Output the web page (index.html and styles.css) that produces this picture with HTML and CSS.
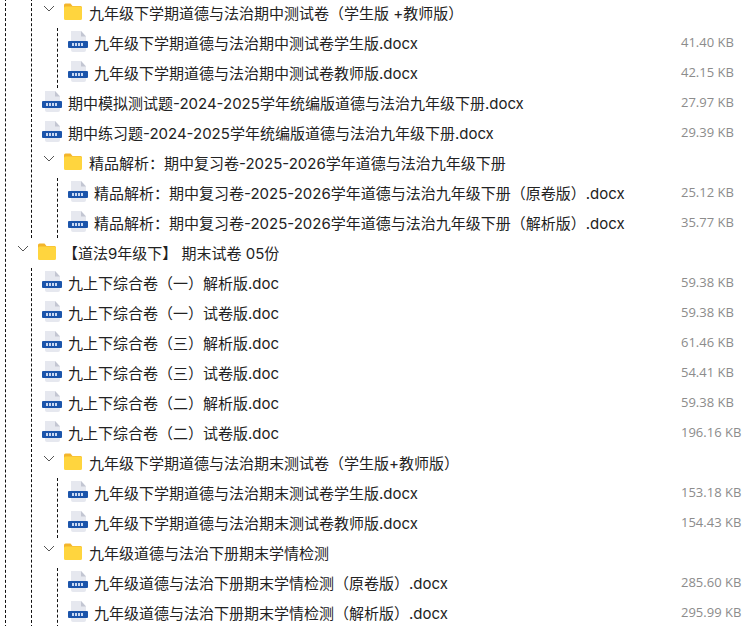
FILE: index.html
```html
<!DOCTYPE html>
<html lang="zh-CN">

<head>
    <meta charset="UTF-8">
    <meta name="viewport" content="width=device-width, initial-scale=1.0">
    <title>文件列表</title>
    <link rel="stylesheet" href="styles.css">
</head>

<body>
    <svg class="defs" width="0" height="0" aria-hidden="true">
        <symbol id="chevron" viewBox="0 0 12 7">
            <polyline points="1,1 6,6 11,1" fill="none" stroke="#555" stroke-width="1"></polyline>
        </symbol>
        <symbol id="folder" viewBox="0 0 18 17">
            <path d="M1.5 0.5h5l2 2.5h8a1.5 1.5 0 0 1 1.5 1.5v2h-18v-4.500a1.500 1.500 0 0 1 1.500-1.500z" fill="#f3b52c"></path>
            <path d="M1.500 3.500h15a1.500 1.500 0 0 1 1.500 1.500v10.500a1.500 1.500 0 0 1-1.500 1.500h-15a1.500 1.500 0 0 1-1.500-1.500v-10.500a1.500 1.500 0 0 1 1.500-1.500z" fill="#ffd53e"></path>
        </symbol>
        <symbol id="docx" viewBox="0 0 20 21">
            <path d="M3 0h10l5 5.500v13.500a2 2 0 0 1-2 2h-11a2 2 0 0 1-2-2z" fill="#e6e8ef"></path>
            <path d="M13 0l5 5.500h-5z" fill="#c3c6d2"></path>
            <rect x="0" y="10" width="20" height="7" rx="1" fill="#1c55ab"></rect>
            <line x1="4" y1="13.500" x2="16" y2="13.500" stroke="#c9d8f2" stroke-width="3" stroke-dasharray="2 1"></line>
        </symbol>
    </svg>

    <div class="tree" id="tree"></div>

    <script src="tree.js"></script>
</body>

</html>
```

FILE: styles.css
```css
body {
    font-family: Inter, "Noto Sans CJK SC", sans-serif;
    margin: 0;
    background-color: #fff;
    color: #222;
    overflow: hidden;
    height: 626px;
}

.defs {
    display: block;
}

.tree {
    margin: -2px 0 0 5px;
    border-left: 1px dashed #111;
}

.group {
    margin-left: 25px;
    border-left: 1px dashed #111;
}

.row {
    display: flex;
    align-items: center;
    height: 30px;
    font-size: 15px;
    white-space: nowrap;
}

.row-folder {
    padding-left: 11px;
}

.row-file {
    padding-left: 10px;
}

.chevron {
    width: 12px;
    height: 7px;
    margin: 0 9px 9px 0;
    flex: none;
}

.icon-folder {
    width: 18px;
    height: 17px;
    margin: 0 7px 4px 0;
    flex: none;
}

.icon-docx {
    width: 20px;
    height: 21px;
    margin: 0 6px 3px 0;
    flex: none;
}

.name {
    flex: 1;
    min-width: 0;
    margin-bottom: 2px;
}

.size {
    width: 65px;
    flex: none;
    margin-bottom: 2px;
    font-family: "Open Sans", sans-serif;
    font-size: 13px;
    color: #8c8c8c;
}
```

FILE: tree.js
```js
const data = [
    { group: [
        { name: '九年级下学期道德与法治期中测试卷（学生版 +教师版）', children: [
            { name: '九年级下学期道德与法治期中测试卷学生版.docx', size: '41.40 KB' },
            { name: '九年级下学期道德与法治期中测试卷教师版.docx', size: '42.15 KB' }
        ] },
        { name: '期中模拟测试题-2024-2025学年统编版道德与法治九年级下册.docx', size: '27.97 KB' },
        { name: '期中练习题-2024-2025学年统编版道德与法治九年级下册.docx', size: '29.39 KB' },
        { name: '精品解析：期中复习卷-2025-2026学年道德与法治九年级下册', children: [
            { name: '精品解析：期中复习卷-2025-2026学年道德与法治九年级下册（原卷版）.docx', size: '25.12 KB' },
            { name: '精品解析：期中复习卷-2025-2026学年道德与法治九年级下册（解析版）.docx', size: '35.77 KB' }
        ] }
    ] },
    { name: '【道法9年级下】 期末试卷 05份', children: [
        { name: '九上下综合卷（一）解析版.doc', size: '59.38 KB' },
        { name: '九上下综合卷（一）试卷版.doc', size: '59.38 KB' },
        { name: '九上下综合卷（三）解析版.doc', size: '61.46 KB' },
        { name: '九上下综合卷（三）试卷版.doc', size: '54.41 KB' },
        { name: '九上下综合卷（二）解析版.doc', size: '59.38 KB' },
        { name: '九上下综合卷（二）试卷版.doc', size: '196.16 KB' },
        { name: '九年级下学期道德与法治期末测试卷（学生版+教师版）', children: [
            { name: '九年级下学期道德与法治期末测试卷学生版.docx', size: '153.18 KB' },
            { name: '九年级下学期道德与法治期末测试卷教师版.docx', size: '154.43 KB' }
        ] },
        { name: '九年级道德与法治下册期末学情检测', children: [
            { name: '九年级道德与法治下册期末学情检测（原卷版）.docx', size: '285.60 KB' },
            { name: '九年级道德与法治下册期末学情检测（解析版）.docx', size: '295.99 KB' }
        ] }
    ] }
];

function icon(id, cls) {
    return `<svg class="${cls}"><use href="#${id}"></use></svg>`;
}

function renderItem(item) {
    if (item.group) {
        return `<div class="group">${item.group.map(renderItem).join('')}</div>`;
    }
    if (item.children) {
        return `<div class="row row-folder">${icon('chevron', 'chevron')}${icon('folder', 'icon-folder')}<span class="name">${item.name}</span></div>`
            + `<div class="group">${item.children.map(renderItem).join('')}</div>`;
    }
    return `<div class="row row-file">${icon('docx', 'icon-docx')}<span class="name">${item.name}</span><span class="size">${item.size}</span></div>`;
}

document.getElementById('tree').innerHTML = data.map(renderItem).join('');
```
